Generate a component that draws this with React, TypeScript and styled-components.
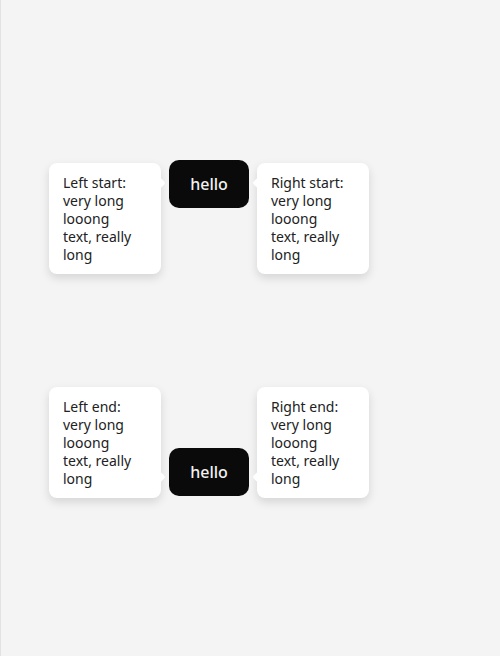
import React from "react";
import styled, { createGlobalStyle } from "styled-components";

const GlobalStyle = createGlobalStyle`
  html, body {
    margin: 0;
    padding: 0;
    background: #f4f4f4;
  }
  body {
    font-family: "Noto Sans", "DejaVu Sans", sans-serif;
  }
`;

const Stage = styled.div`
  min-height: 656px;
  box-sizing: border-box;
  border-left: 1px solid #e2e2e2;
  padding: 160px 0 0 48px;
  display: flex;
  flex-direction: column;
  gap: 113px;
`;

const Row = styled.div<{ $align: "start" | "end" }>`
  display: flex;
  gap: 8px;
  align-items: ${(p) => (p.$align === "start" ? "flex-start" : "flex-end")};
`;

const Tip = styled.div<{ $align: "start" | "end"; $side: "left" | "right" }>`
  position: relative;
  box-sizing: border-box;
  width: 112px;
  height: 111px;
  padding: 11px 14px 10px;
  background: #ffffff;
  border-radius: 8px;
  box-shadow: 0 4px 10px rgba(0, 0, 0, 0.13);
  color: #222222;
  font-size: 14px;
  line-height: 18px;
  margin-top: ${(p) => (p.$align === "start" ? "3px" : "0")};
  margin-bottom: ${(p) => (p.$align === "end" ? "-2px" : "0")};

  &::before {
    content: "";
    position: absolute;
    width: 8px;
    height: 8px;
    background: #ffffff;
    border-radius: 2px;
    transform: rotate(45deg);
    ${(p) => (p.$side === "left" ? "right: -3px;" : "left: -3px;")}
    ${(p) => (p.$align === "start" ? "top: 16px;" : "bottom: 17px;")}
  }
`;

const Line = styled.span`
  display: block;
  white-space: nowrap;
`;

const Button = styled.button`
  box-sizing: border-box;
  width: 80px;
  height: 48px;
  border: none;
  border-radius: 10px;
  background: #0a0a0a;
  color: #f2f2f2;
  font-family: "Noto Sans", "DejaVu Sans", sans-serif;
  font-size: 16px;
  font-weight: 500;
  padding: 0;
  display: flex;
  align-items: center;
  justify-content: center;
`;

const lines = (label: string) => [label, "very long", "looong", "text, really", "long"];

const TipText: React.FC<{ label: string }> = ({ label }) => (
  <>
    {lines(label).map((l, i) => (
      <Line key={i}>{l}</Line>
    ))}
  </>
);

export default function App() {
  return (
    <>
      <GlobalStyle />
      <Stage>
        <Row $align="start">
          <Tip $align="start" $side="left">
            <TipText label="Left start:" />
          </Tip>
          <Button>hello</Button>
          <Tip $align="start" $side="right">
            <TipText label="Right start:" />
          </Tip>
        </Row>
        <Row $align="end">
          <Tip $align="end" $side="left">
            <TipText label="Left end:" />
          </Tip>
          <Button>hello</Button>
          <Tip $align="end" $side="right">
            <TipText label="Right end:" />
          </Tip>
        </Row>
      </Stage>
    </>
  );
}
